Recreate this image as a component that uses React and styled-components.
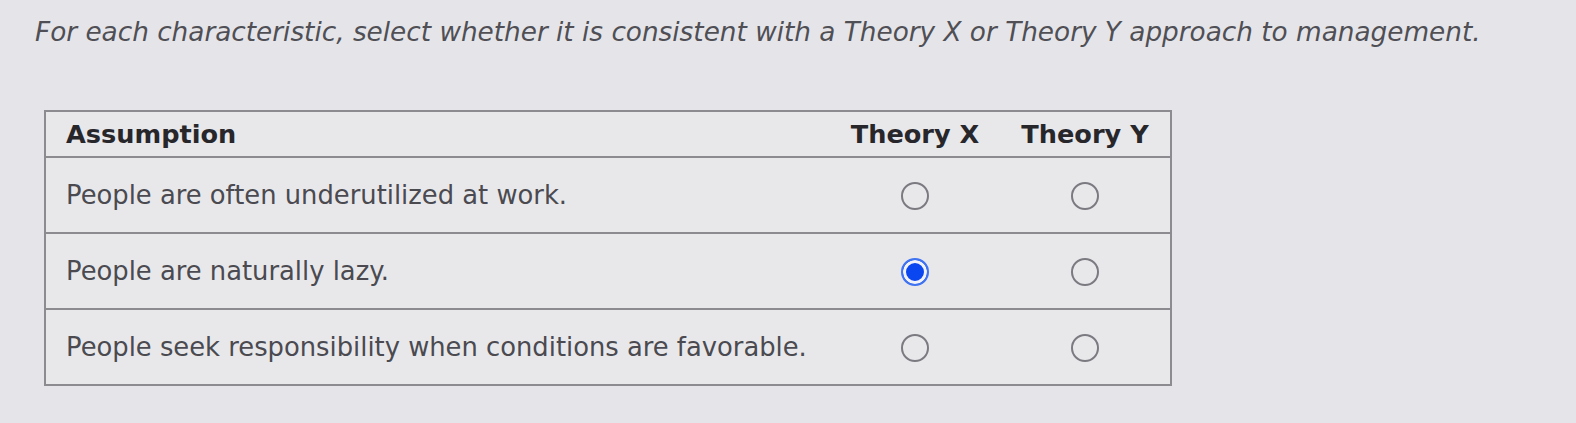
import React from "react";
import styled, { createGlobalStyle } from "styled-components";

const GlobalStyle = createGlobalStyle`
  html, body {
    margin: 0;
    padding: 0;
    background: #e5e5e9;
  }
  body {
    font-family: "DejaVu Sans", Verdana, sans-serif;
  }
`;

const Page = styled.div`
  width: 1576px;
  height: 423px;
  padding: 13px 0 0 35px;
  box-sizing: border-box;
  background: #e5e5e9;
`;

const Prompt = styled.p`
  margin: 0;
  font-style: italic;
  font-size: 26.3px;
  line-height: 38px;
  color: #4f4f55;
  white-space: nowrap;
`;

const Table = styled.table`
  margin: 59px 0 0 9px;
  width: 1128px;
  border-collapse: collapse;
  background: #e8e8eb;
  border: 2px solid #8c8c90;
`;

const HeadCell = styled.th`
  height: 44px;
  padding: 0 ${(p) => (p.$first ? "20px" : "0")};
  text-align: ${(p) => (p.$first ? "left" : "center")};
  width: ${(p) => (p.$first ? "auto" : "170px")};
  font-size: 25.6px;
  font-weight: bold;
  color: #27272b;
  vertical-align: middle;
`;

const Row = styled.tr`
  border-top: 2px solid #8c8c90;
`;

const Cell = styled.td`
  height: 74px;
  padding: 0 ${(p) => (p.$first ? "20px" : "0")};
  text-align: ${(p) => (p.$first ? "left" : "center")};
  font-size: 25.8px;
  color: #4a4a50;
  vertical-align: middle;
`;

const Radio = styled.span`
  display: inline-block;
  box-sizing: border-box;
  width: 28px;
  height: 28px;
  border-radius: 50%;
  vertical-align: middle;
  border: 2px solid ${(p) => (p.$checked ? "#3f73f2" : "#7a7a80")};
  background: ${(p) => (p.$checked ? "#0b47f0" : "transparent")};
  box-shadow: ${(p) => (p.$checked ? "inset 0 0 0 3px #f2f3fa" : "none")};
`;

const rows = [
  { text: "People are often underutilized at work.", pick: null },
  { text: "People are naturally lazy.", pick: "x" },
  { text: "People seek responsibility when conditions are favorable.", pick: null },
];

export default function App() {
  return (
    <Page>
      <GlobalStyle />
      <Prompt>
        For each characteristic, select whether it is consistent with a Theory X or Theory Y
        approach to management.
      </Prompt>
      <Table>
        <thead>
          <tr>
            <HeadCell $first>Assumption</HeadCell>
            <HeadCell>Theory X</HeadCell>
            <HeadCell>Theory Y</HeadCell>
          </tr>
        </thead>
        <tbody>
          {rows.map((r) => (
            <Row key={r.text}>
              <Cell $first>{r.text}</Cell>
              <Cell>
                <Radio $checked={r.pick === "x"} />
              </Cell>
              <Cell>
                <Radio $checked={r.pick === "y"} />
              </Cell>
            </Row>
          ))}
        </tbody>
      </Table>
    </Page>
  );
}
